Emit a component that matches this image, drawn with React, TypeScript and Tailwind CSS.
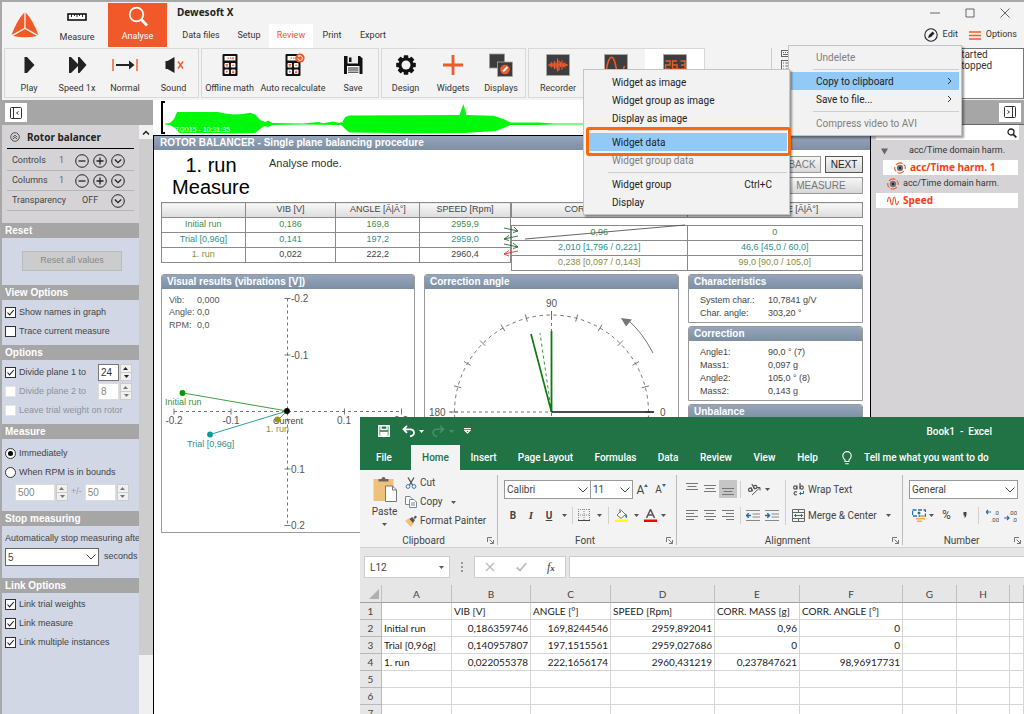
import React from "react";

type Kids = { children?: React.ReactNode };

/* ---------- shared ---------- */

function Caret({ className = "text-[#555]" }: { className?: string }) {
  return (
    <svg viewBox="0 0 5 3" className={"h-[3px] w-[5px] shrink-0 " + className}>
      <path d="M0 0h5L2.5 3z" fill="currentColor" />
    </svg>
  );
}

function SelectBox({ label, value, className, chevron = "#444" }: { label: string; value: string; className: string; chevron?: string }) {
  return (
    <div className={"grid items-center border bg-white " + className}>
      <select aria-label={label} className="col-start-1 row-start-1 h-full w-full appearance-none bg-transparent pl-[2px] outline-none">
        <option>{value}</option>
      </select>
      <svg viewBox="0 0 10 6" className="pointer-events-none col-start-1 row-start-1 mr-[2px] h-[6px] w-[10px] justify-self-end">
        <path d="M0.5 0.5L5 5L9.5 0.5" fill="none" stroke={chevron} strokeWidth="1" />
      </svg>
    </div>
  );
}

/* ---------- title bar ---------- */

const tabs = ["Data files", "Setup", "Review", "Print", "Export"];
const tabWidths = ["w-[56px]", "w-[40px]", "w-[44px]", "w-[38px]", "w-[44px]"];

function TitleBar() {
  return (
    <header className="flex h-[46px] shrink-0 text-[9px] text-[#333]">
      <div className="flex w-[46px] items-center justify-center">
        <svg viewBox="0 0 28 26" className="h-[26px] w-[28px]">
          <path d="M13.3 0.5L13.3 16L0.5 23Q6 8 13.3 0.5z" fill="#f0592a" />
          <path d="M14.6 0.5L14.6 16L27.4 23Q22 8 14.6 0.5z" fill="#f0592a" />
          <path d="M14 17L2 24Q14 26.5 26 24z" fill="#f0592a" />
        </svg>
      </div>
      <button className="flex w-[58px] flex-col items-center pt-[11px]">
        <svg viewBox="0 0 20 8" className="h-[8px] w-[20px]">
          <rect x="1" y="1" width="18" height="6" fill="#fff" stroke="#111" strokeWidth="1.6" />
          <path d="M4.5 1v3M7.5 1v2M10 1v3M12.5 1v2M15.5 1v3" stroke="#111" strokeWidth="0.9" />
        </svg>
        <span className="mt-[10px] leading-[12px]">Measure</span>
      </button>
      <button className="mt-[1px] ml-[2px] flex h-[44px] w-[59px] flex-col items-center bg-[#f1592a] pt-[3px] text-white">
        <svg viewBox="0 0 22 22" className="h-[22px] w-[22px]" fill="none" stroke="#fff">
          <circle cx="9.5" cy="8.5" r="6.8" strokeWidth="1.8" />
          <path d="M14.2 13.4L20 19.5" strokeWidth="2.8" />
        </svg>
        <span className="mt-[2px] leading-[12px]">Analyse</span>
      </button>
      <div className="flex flex-col pl-[6px]">
        <h1 className="pt-[3px] pl-[4px] font-['Noto_Sans',sans-serif] text-[10px] leading-[14px] font-bold text-[#222]">Dewesoft X</h1>
        <nav className="mt-[5px] flex h-[24px]">
          {tabs.map((t, i) => (
            <a key={t} href="#" className={"flex items-center justify-center " + tabWidths[i] + (t === "Review" ? " bg-white text-[#f1592a]" : "")}>
              {t}
            </a>
          ))}
        </nav>
      </div>
      <div className="ml-auto flex flex-col pr-[7px]">
        <div className="flex justify-end gap-[25px] pt-[6px] pr-[7px]">
          {["M0 5h10", "M1 1h8v8h-8z", "M0.5 0.5l9 9M9.5 0.5l-9 9"].map((d, i) => (
            <button key={d} aria-label={["Minimize", "Maximize", "Close"][i]}>
              <svg viewBox="0 0 10 10" className="h-[10px] w-[10px]" fill="none" stroke="#666" strokeWidth="1">
                <path d={d} />
              </svg>
            </button>
          ))}
        </div>
        <div className="flex items-center justify-end gap-[11px] pt-[10px]">
          <button className="flex items-center gap-[5px]">
            <svg viewBox="0 0 14 14" className="h-[14px] w-[14px]">
              <circle cx="7" cy="7" r="6.2" fill="none" stroke="#222" strokeWidth="1.1" />
              <path d="M4 10l1-3 3.6-3.4 1.9 1.9L7 9z" fill="#222" />
            </svg>
            Edit
          </button>
          <button className="flex items-center gap-[5px]">
            <svg viewBox="0 0 12 9" className="h-[9px] w-[12px]" stroke="#f1592a" strokeWidth="1.5">
              <path d="M0 1h12M0 4.5h12M0 8h12" />
            </svg>
            Options
          </button>
        </div>
      </div>
    </header>
  );
}

/* ---------- ribbon ---------- */

function Calc({ badge = false }: { badge?: boolean }) {
  return (
    <svg viewBox="0 0 24 24" className="h-[24px] w-[24px]">
      <rect x="4.5" y="1" width="15" height="22" rx="1" fill="#111" />
      <rect x="6.5" y="3" width="11" height="4.5" fill="#fff" />
      <path d="M9.5 5.2h1.6M12 5.2h1.5M15 4v2.4" stroke="#f1592a" strokeWidth="1.3" />
      <g fill="#fff">
        <rect x="6.5" y="10" width="4.6" height="4.6" rx="1" />
        <rect x="12.9" y="10" width="4.6" height="4.6" rx="1" />
        <rect x="6.5" y="16.5" width="4.6" height="4.6" rx="1" />
        <rect x="12.9" y="16.5" width="4.6" height="4.6" rx="1" />
      </g>
      <path d="M7.700 11.200l2.200 2.200M9.900 11.200l-2.200 2.200M14.100 12.300h2.200M7.800 18.800h2M8.800 17.800v2M14.100 18.200h2.200M14.100 19.600h2.200" stroke="#f1592a" strokeWidth="1.100" />
      {badge && (
        <g>
          <circle cx="19" cy="5" r="4.6" fill="#f1592a" />
          <path d="M16.8 5.3a2.3 2.3 0 1 0 1.2-2.2" fill="none" stroke="#fff" strokeWidth="0.9" />
          <path d="M16.6 2.4l2.2-.2-.9 2z" fill="#fff" />
        </g>
      )}
    </svg>
  );
}

const icon = "h-[24px] w-[24px]";
const PlayIcon = () => (
  <svg viewBox="0 0 24 24" className={icon}><path d="M7.5 4h2.5l7.500 8-7.5 8H7.500z" fill="#222" /></svg>
);
const SpeedIcon = () => (
  <svg viewBox="0 0 24 24" className={icon}><path d="M4 4h2l7 7V4h1.500l7 8-7 8H13v-7l-7 7H4z" fill="#222" /></svg>
);
const NormalIcon = () => (
  <svg viewBox="0 0 26 24" className="h-[24px] w-[26px]">
    <path d="M1 6v12M25 6v12" stroke="#f1592a" strokeWidth="1.4" />
    <path d="M4 11h13V7.500l5.500 4.500-5.500 4.500V13H4z" fill="#222" />
  </svg>
);
const SoundIcon = () => (
  <svg viewBox="0 0 24 24" className={icon}>
    <path d="M3.500 8h2l7-4v16l-7-4h-2z" fill="#222" />
    <path d="M16 8.500l5 7M21 8.500l-5 7" stroke="#f1592a" strokeWidth="1.400" />
  </svg>
);
const SaveIcon = () => (
  <svg viewBox="0 0 24 24" className={icon}>
    <path d="M3 3h16l2.500 2.500V21H3z" fill="#111" />
    <path d="M6.500 3h10.500v7.500H6.500z" fill="#eee" />
    <path d="M8 4.500h2.500v4.500H8z" fill="#111" />
    <path d="M6 13h12.500v8H6z" fill="#fff" />
    <path d="M7 15h10.500M7 17h10.500M7 19.200h10.500" stroke="#222" strokeWidth="1" />
  </svg>
);
const GearIcon = () => (
  <svg viewBox="0 0 24 24" className={icon}>
    {[0, 45, 90, 135].map((a) => (
      <rect key={a} x="9.7" y="2.200" width="4.600" height="19.600" rx="0.800" fill="#111" transform={`rotate(${a} 12 12)`} />
    ))}
    <circle cx="12" cy="12" r="7.600" fill="#111" />
    <circle cx="12" cy="12" r="4.500" fill="#f3f3f3" />
  </svg>
);
const PlusIcon = () => (
  <svg viewBox="0 0 24 24" className={icon}><path d="M12 2v20M2 12h20" stroke="#f1592a" strokeWidth="2.800" /></svg>
);
const DisplaysIcon = () => (
  <svg viewBox="0 0 24 24" className={icon}>
    <rect x="0.500" y="1" width="15" height="14" fill="#3c3c3c" stroke="#999" strokeWidth="0.800" />
    <rect x="8.500" y="9" width="15" height="14.500" fill="#3c3c3c" stroke="#aaa" strokeWidth="0.800" />
    <circle cx="16" cy="16.500" r="4.800" fill="#f1592a" />
    <path d="M14 18.500l4.500-4.500" stroke="#fff" strokeWidth="2" />
  </svg>
);
const RecorderIcon = () => (
  <svg viewBox="0 0 24 24" className={icon}>
    <rect x="0.500" y="1.500" width="23" height="21" fill="#3e3e3e" stroke="#aaa" strokeWidth="0.800" />
    <path d="M2 12h20M4 10.500v3M5.500 9v5.500M7 10v4M8.500 8v8M10 9.500v6M11.500 5.500v13M13 7.500v10M14.500 9v5M16 7.500v9M17.500 10v4M19 9.500v5M20.500 11v2" stroke="#f1592a" strokeWidth="1.200" />
  </svg>
);
const ScopeIcon = () => (
  <svg viewBox="0 0 24 24" className={icon}>
    <rect x="0.500" y="1.500" width="23" height="21" fill="#3e3e3e" stroke="#aaa" strokeWidth="0.800" />
    <path d="M2.500 16C5 1 9.500 1 11.500 12s6 11 9 1" fill="none" stroke="#f1592a" strokeWidth="1.600" />
  </svg>
);
const DigitalIcon = () => (
  <svg viewBox="0 0 24 24" className={icon}>
    <rect x="0.500" y="1.500" width="23" height="21" fill="#3e3e3e" stroke="#aaa" strokeWidth="0.800" />
    <path d="M2.500 8h4.500v4H2.500v4H7M14 8H9.500v8H14v-4H9.500M17.500 8H22v8h-4.500M18 12h4" fill="none" stroke="#f1592a" strokeWidth="1.400" />
    <rect x="15" y="15" width="1.500" height="1.500" fill="#f1592a" />
  </svg>
);

type Tool = { label: string; w: string; el: React.ReactNode };
const groups: { w: string; tools: Tool[] }[] = [
  {
    w: "w-[195px]",
    tools: [
      { label: "Play", w: "w-[48px]", el: <PlayIcon /> },
      { label: "Speed 1x", w: "w-[48px]", el: <SpeedIcon /> },
      { label: "Normal", w: "w-[48px]", el: <NormalIcon /> },
      { label: "Sound", w: "w-[49px]", el: <SoundIcon /> },
    ],
  },
  {
    w: "w-[178px]",
    tools: [
      { label: "Offline math", w: "w-[55px]", el: <Calc /> },
      { label: "Auto recalculate", w: "w-[72px]", el: <Calc badge /> },
      { label: "Save", w: "w-[48px]", el: <SaveIcon /> },
    ],
  },
  {
    w: "w-[145px]",
    tools: [
      { label: "Design", w: "w-[47px]", el: <GearIcon /> },
      { label: "Widgets", w: "w-[48px]", el: <PlusIcon /> },
      { label: "Displays", w: "w-[48px]", el: <DisplaysIcon /> },
    ],
  },
  {
    w: "w-[177px]",
    tools: [
      { label: "Recorder", w: "w-[58px]", el: <RecorderIcon /> },
      { label: "Scope", w: "w-[58px]", el: <ScopeIcon /> },
      { label: "Digital", w: "w-[59px] bg-white", el: <DigitalIcon /> },
    ],
  },
];

function Ribbon() {
  return (
    <div className="flex h-[51px] shrink-0 gap-[2px] pl-[2px] text-[9px] text-[#333]">
      {groups.map((g, i) => (
        <div key={i} className={"flex h-[50px] shrink-0 border border-[#d8d8d8] " + g.w}>
          {g.tools.map((t) => (
            <button key={t.label} className={"flex shrink-0 flex-col items-center pt-[4px] " + t.w}>
              {t.el}
              <span className="mt-[5px] leading-[12px] whitespace-nowrap">{t.label}</span>
            </button>
          ))}
        </div>
      ))}
      <div className="ml-[64px] flex shrink-0 border-l border-[#ccc] pl-[9px]">
        <div className="flex flex-col gap-[3px] pt-[2px]">
          <svg viewBox="0 0 10 7" className="h-[7px] w-[10px]" fill="none" stroke="#555" strokeWidth="0.9">
            <rect x="0.500" y="0.500" width="9" height="6" />
            <path d="M2 2.500h1M4 2.500h1M6 2.500h1M2 4.500h5" />
          </svg>
          <svg viewBox="0 0 10 12" className="h-[12px] w-[10px]" fill="none" stroke="#555" strokeWidth="0.900">
            <rect x="0.500" y="0.500" width="9" height="11" />
            <path d="M2 3h1M4.500 3H8M2 6h1M4.500 6H8M2 9h1M4.500 9H8" />
          </svg>
        </div>
      </div>
      <div className="ml-[10px] flex-1 border border-[#777] bg-white pl-[152px] text-[10px] leading-[11px]">
        <p>started</p>
        <p>stopped</p>
      </div>
    </div>
  );
}

/* ---------- left sidebar ---------- */

function Round({ d, label }: { d: string; label: string }) {
  return (
    <button aria-label={label}>
      <svg viewBox="0 0 14 14" className="h-[14px] w-[14px]" fill="none" stroke="#222">
        <circle cx="7" cy="7" r="6.300" strokeWidth="1" />
        <path d={d} strokeWidth="1.300" />
      </svg>
    </button>
  );
}
const MINUS = "M3.500 7h7";
const PLUS = "M3.500 7h7M7 3.500v7";
const DOWN = "M3.800 5.500L7 8.700l3.200-3.200";

function Section({ title, body, children }: Kids & { title: string; body: string }) {
  return (
    <section>
      <h2 className="h-[15px] bg-[#a6a6a6] pl-[3px] text-[10px] leading-[15px] font-bold text-white">{title}</h2>
      <div className={"flex flex-col pl-[3px] " + body}>{children}</div>
    </section>
  );
}

function Check({ label, checked = false, disabled = false }: { label: string; checked?: boolean; disabled?: boolean }) {
  return (
    <label className={"flex h-[19px] items-center gap-[3px] whitespace-nowrap " + (disabled ? "text-[#8d93a0]" : "")}>
      <span className="grid">
        <input
          type="checkbox"
          defaultChecked={checked}
          disabled={disabled}
          className={"peer col-start-1 row-start-1 h-[11px] w-[11px] appearance-none border bg-white " + (disabled ? "border-[#e4e4e4]" : "border-[#333]")}
        />
        <svg viewBox="0 0 11 11" className="pointer-events-none invisible col-start-1 row-start-1 h-[11px] w-[11px] peer-checked:visible">
          <path d="M2.500 5.500L4.600 7.800L8.800 3" fill="none" stroke="#222" strokeWidth="1.100" />
        </svg>
      </span>
      {label}
    </label>
  );
}

function Radio({ label, checked = false }: { label: string; checked?: boolean }) {
  return (
    <label className="flex h-[19px] items-center gap-[3px] whitespace-nowrap">
      <span className="grid place-items-center">
        <input type="radio" name="measure-start" defaultChecked={checked} className="peer col-start-1 row-start-1 h-[11px] w-[11px] appearance-none rounded-full border border-[#333] bg-white" />
        <span className="pointer-events-none invisible col-start-1 row-start-1 h-[5px] w-[5px] rounded-full bg-black peer-checked:visible" />
      </span>
      {label}
    </label>
  );
}

function Spin({ label, value, w, dim = true }: { label: string; value: string; w: string; dim?: boolean }) {
  return (
    <span className="flex h-[17px] gap-px">
      <input aria-label={label} defaultValue={value} disabled={dim} className={"h-[17px] border bg-white pl-[2px] text-[10px] outline-none " + w + (dim ? " border-[#ddd] text-[#888]" : " border-[#777] text-[#333]")} />
      <span className={"flex w-[12px] flex-col border border-[#ccc] bg-[#f0f0f0] " + (dim ? "text-[#777]" : "text-[#222]")}>
        <button aria-label={label + " up"} className="flex flex-1 rotate-180 items-center justify-center"><Caret className="" /></button>
        <button aria-label={label + " down"} className="flex flex-1 items-center justify-center border-t border-[#ccc]"><Caret className="" /></button>
      </span>
    </span>
  );
}

function PanelButton({ flip = false }: { flip?: boolean }) {
  return (
    <button aria-label="Toggle panel" className="flex h-[19px] w-[22px] items-center justify-center bg-white">
      <svg viewBox="0 0 12 12" className={"h-[12px] w-[12px] " + (flip ? "rotate-180" : "")} fill="none" stroke="#333" strokeWidth="1">
        <rect x="0.500" y="0.500" width="11" height="11" rx="1" />
        <path d="M3.500 0.500v11M8.500 4.500L6.500 6l2 1.500" />
      </svg>
    </button>
  );
}

function Sidebar() {
  return (
    <aside className="flex w-[151px] shrink-0 flex-col">
      <div className="flex h-[25px] shrink-0 items-center bg-[#a6a6a6] pl-[3px]"><PanelButton /></div>
      <div className="flex flex-1">
        <div className="flex w-[137px] flex-col overflow-hidden bg-[#d1d7e4] text-[9px] text-[#444]">
          <div className="bg-[#d6d3d7] px-[5px] pb-[12px]">
            <div className="mb-[2px] flex h-[24px] items-center gap-[7px] border-b border-black pt-px pl-[3px]">
              <svg viewBox="0 0 10 10" className="h-[10px] w-[10px]" fill="none" stroke="#444" strokeWidth="0.900">
                <circle cx="5" cy="5" r="4.300" />
                <path d="M2.800 5.200L5 3.200l2.200 2M2.800 7.200L5 5.200l2.200 2" />
              </svg>
              <h2 className="font-['Noto_Sans',sans-serif] text-[10px] leading-[12px] font-bold text-[#222]">Rotor balancer</h2>
            </div>
            {["Controls", "Columns"].map((n) => (
              <div key={n} className="flex h-[20px] items-center border-b border-[#b5b5b5] pr-[9px] pl-[5px] font-['Roboto',sans-serif]">
                <span className="w-[47px]">{n}</span>
                <span className="text-[#666]">1</span>
                <span className="ml-auto flex gap-[4px]">
                  <Round d={MINUS} label={n + " minus"} />
                  <Round d={PLUS} label={n + " plus"} />
                  <Round d={DOWN} label={n + " more"} />
                </span>
              </div>
            ))}
            <div className="flex h-[20px] items-center border-b border-[#b5b5b5] pr-[9px] pl-[5px] font-['Roboto',sans-serif]">
              <span className="w-[70px]">Transparency</span>
              <span>OFF</span>
              <span className="ml-auto flex"><Round d={DOWN} label="Transparency more" /></span>
            </div>
          </div>
          <Section title="Reset" body="items-center pt-[13px] pb-[14px]">
            <button disabled className="h-[20px] w-[100px] border border-[#bbb] bg-[#ccc] text-[#888]">Reset all values</button>
          </Section>
          <Section title="View Options" body="pt-[3px] pb-[4px]">
            <Check label="Show names in graph" checked />
            <Check label="Trace current measure" />
          </Section>
          <Section title="Options" body="pt-[3px] pb-[4px]">
            <div className="flex items-center justify-between pr-[7px]"><Check label="Divide plane 1 to" checked /><Spin label="Plane 1 divisions" value="24" w="w-[21px]" dim={false} /></div>
            <div className="flex items-center justify-between pr-[7px]"><Check label="Divide plane 2 to" disabled /><Spin label="Plane 2 divisions" value="8" w="w-[21px]" /></div>
            <Check label="Leave trial weight on rotor" disabled />
          </Section>
          <Section title="Measure" body="pt-[5px] pb-[9px]">
            <Radio label="Immediately" checked />
            <Radio label="When RPM is in bounds" />
            <div className="flex h-[20px] items-center gap-[3px] pl-[10px] text-[#999]">
              <Spin label="RPM" value="500" w="w-[40px]" />+/-<Spin label="RPM tolerance" value="50" w="w-[31px]" />
            </div>
          </Section>
          <Section title="Stop measuring" body="pt-[6px] pb-[12px]">
            <p className="leading-[12px] whitespace-nowrap">Automatically stop measuring after</p>
            <div className="mt-[4px] flex items-center gap-[5px]">
              <SelectBox label="Seconds" value="5" className="h-[18px] w-[94px] border-[#666] text-[10px]" />
              seconds
            </div>
          </Section>
          <Section title="Link Options" body="pt-[2px]">
            <Check label="Link trial weights" checked />
            <Check label="Link measure" checked />
            <Check label="Link multiple instances" checked />
          </Section>
        </div>
        <div className="flex w-[14px] flex-col bg-[#f0f0f0]">
          <button aria-label="Scroll up" className="flex h-[14px] items-center justify-center">
            <svg viewBox="0 0 8 5" className="h-[5px] w-[8px]"><path d="M1 4.500L4 1.500l3 3" fill="none" stroke="#222" strokeWidth="1.500" /></svg>
          </button>
          <div className="h-[516px] bg-[#cdcdcd]" />
        </div>
      </div>
    </aside>
  );
}

/* ---------- centre ---------- */

function Wave() {
  return (
    <svg viewBox="0 0 717 35" preserveAspectRatio="none" className="h-[35px] w-full bg-white">
      <path
        d="M12 23.500L17 23 21 19 24 12 65 12 72 13.500 80 14.500 90 14 97 12.800 102 14.500 107 20 112 22 115 20.500 119 23 150 23.500 165 22 170 23.200 180 21.500 186 23 188 22 190 23.300 189 22 192 17 196 15.500 306 15 310 4 313 15 340 15.800 350 19 357 22.500 385 22.500 400 23.600 717 23.600V24.400H400L385 25H357L350 28 342 31 310 33 250 33.500 240 33 196 32.500 192 29 188 25 150 24.400 119 25 115 27 111 26 107 29 102 33 80 33.500 60 33 26 33 22 28 17 25 12 24.500z"
        fill="#00f90a"
      />
      <path d="M12 2H9v31h3" fill="none" stroke="#000" strokeWidth="2" />
      <text x="22" y="32" fill="#fff" fontSize="7" fontFamily="Liberation Sans, sans-serif">7/2015 - 10:31:35</text>
    </svg>
  );
}

const th = "h-[15px] border border-[#8a8a8a] bg-linear-to-b from-[#f8f8f8] to-[#dcdcdc] p-0 text-center font-normal";
const td = "h-[15px] border border-[#8a8a8a] p-0 text-center";

function LeftTable() {
  const rows = [
    ["text-[#3f8f3f]", "text-[#3f8f3f]", "Initial run", "0,186", "169,8", "2959,9"],
    ["text-[#2f8f8f]", "text-[#2f8f8f]", "Trial [0,96g]", "0,141", "197,2", "2959,0"],
    ["text-[#8c8c3a]", "text-[#444]", "1. run", "0,022", "222,2", "2960,4"],
  ];
  return (
    <table className="w-full table-fixed border-collapse">
      <thead>
        <tr>
          <th className={th + " w-[24%]"} />
          <th className={th + " w-[26%]"}>VIB [V]</th>
          <th className={th + " w-[24%]"}>ANGLE [Ã|Â°]</th>
          <th className={th + " w-[26%]"}>SPEED [Rpm]</th>
        </tr>
      </thead>
      <tbody>
        {rows.map((r) => (
          <tr key={r[2]} className={r[1]}>
            <td className={td + " " + r[0]}>{r[2]}</td>
            <td className={td}>{r[3]}</td>
            <td className={td}>{r[4]}</td>
            <td className={td}>{r[5]}</td>
          </tr>
        ))}
      </tbody>
    </table>
  );
}

function RightTables() {
  return (
    <div className="relative flex flex-1 flex-col gap-[7px]">
      <table className="w-full table-fixed border-collapse">
        <thead>
          <tr><th className={th}>CORR. MASS [g]</th><th className={th}>CORR. ANGLE [Ã|Â°]</th></tr>
        </thead>
      </table>
      <table className="w-full table-fixed border-collapse">
        <tbody>
          <tr className="text-[#3f8f3f]"><td className={td}>0,96</td><td className={td}>0</td></tr>
          <tr className="text-[#2f8f8f]"><td className={td}>2,010 [1,796 / 0,221]</td><td className={td}>46,6 [45,0 / 60,0]</td></tr>
          <tr className="text-[#8c8c3a]"><td className={td}>0,238 [0,097 / 0,143]</td><td className={td}>99,0 [90,0 / 105,0]</td></tr>
        </tbody>
      </table>
      <svg viewBox="0 0 190 40" className="pointer-events-none absolute top-[20px] -left-[10px] h-[40px] w-[190px]" fill="none">
        <path d="M24 17L184 3" stroke="#555" strokeWidth="0.900" />
        <path d="M3 6l14 3M13 5l4 4-5 1.500M17 14L3 17M8 13.500L3 17l5 1.500M3 22l14 3M12 21l5 4-5 1.500" stroke="#1f6f2f" strokeWidth="0.900" />
        <path d="M17 29L3 32M8 28.500L3 32l5 2" stroke="#f03030" strokeWidth="0.900" />
      </svg>
    </div>
  );
}

function Box({ title, className = "", children }: Kids & { title: string; className?: string }) {
  return (
    <section className={"overflow-hidden rounded-t-[3px] border border-[#999] bg-white " + className}>
      <h3 className="h-[14px] bg-linear-to-b from-[#94a5bd] to-[#7d8fa2] pl-[5px] text-[10px] leading-[14px] font-bold text-white">{title}</h3>
      {children}
    </section>
  );
}

function VibChart() {
  return (
    <svg viewBox="0 0 252 243" className="h-[243px] w-[252px]" fontFamily="Liberation Sans, sans-serif" fontSize="10" fill="#555">
      <g stroke="#666" strokeWidth="0.900" fill="none">
        <path d="M125.500 9.500v227M12 122.500h228" strokeDasharray="3 3" />
        <path d="M122.500 9.500h6M122.500 66h6M122.500 180h6M122.500 236.500h6M12 119.500v6M69 119.500v6M182.500 119.500v6M239.500 119.500v6" />
      </g>
      <g fontSize="9">
        <text x="7" y="14">Vib:</text><text x="35" y="14">0,000</text>
        <text x="7" y="26">Angle:</text><text x="35" y="26">0,0</text>
        <text x="7" y="39">RPM:</text><text x="35" y="39">0,0</text>
      </g>
      <text x="129" y="13">-0.2</text>
      <text x="129" y="70">-0.1</text>
      <text x="129" y="184">0.1</text>
      <text x="129" y="240">0.2</text>
      <g textAnchor="middle">
        <text x="12" y="135">-0.2</text>
        <text x="69" y="135">-0.1</text>
        <text x="182" y="135">0.1</text>
        <text x="239" y="135">0.2</text>
      </g>
      <path d="M125 122L21 104" stroke="#3f9f3f" />
      <path d="M125 122L48 145.500" stroke="#2f9f9f" />
      <path d="M125 122L116 131" stroke="#999900" />
      <text x="111" y="135" fontSize="9" fill="#444">Current</text>
      <circle cx="125" cy="122" r="2.900" fill="#000" />
      <circle cx="20.500" cy="104" r="2.900" fill="#090" />
      <circle cx="48" cy="145.500" r="2.900" fill="#0a9a9a" />
      <circle cx="115.500" cy="130.500" r="2.900" fill="#990" />
      <text x="3" y="116" fontSize="9" fill="#3f8f3f">Initial run</text>
      <text x="25" y="158" fontSize="9" fill="#2f8f8f">Trial [0,96g]</text>
      <text x="104" y="143" fontSize="9" fill="#8c8c3a">1. run</text>
    </svg>
  );
}

function Gauge() {
  const cx = 126.500, cy = 123, r = 97;
  const ticks = Array.from({ length: 13 }, (_, i) => (i * Math.PI) / 12);
  return (
    <svg viewBox="0 0 253 243" className="h-[243px] w-[253px]" fontFamily="Liberation Sans, sans-serif" fontSize="10" fill="#555">
      <g stroke="#666" strokeWidth="0.900" fill="none">
        <path d={`M${cx - r} ${cy}A${r} ${r} 0 0 1 ${cx + r} ${cy}A${r} ${r} 0 0 1 ${cx - r} ${cy}`} strokeDasharray="3.500 3.500" />
        <path d={`M${cx} 22V240M24 ${cy}H${cx}`} strokeDasharray="3 3" />
        {ticks.map((a) => (
          <path key={a} d={`M${cx + (r - 3.5) * Math.cos(a)} ${cy - (r - 3.5) * Math.sin(a)}L${cx + (r + 4) * Math.cos(a)} ${cy - (r + 4) * Math.sin(a)}`} />
        ))}
        <path d="M228 64Q217 43 203 31" />
      </g>
      <path d="M196 29l11 1.500-6 7z" fill="#777" />
      <path d={`M${cx} ${cy}L115 44`} stroke="#3f8f3f" strokeDasharray="3 3" />
      <path d={`M${cx} ${cy}L106 45`} stroke="#107a10" strokeWidth="1.700" />
      <path d={`M${cx} ${cy}V42`} stroke="#107a10" strokeWidth="1.800" />
      <path d={`M${cx} ${cy}H229`} stroke="#111" strokeWidth="1.700" />
      <text x={cx} y="18" textAnchor="middle">90</text>
      <text x="235" y="127">0</text>
      <text x="4" y="127">180</text>
    </svg>
  );
}

function Facts({ rows }: { rows: string[][] }) {
  return (
    <dl className="grid grid-cols-[68px_1fr] pt-[5px] pl-[11px] text-[9px] leading-[13px] text-[#444]">
      {rows.map(([k, v]) => (
        <React.Fragment key={k}><dt>{k}</dt><dd>{v}</dd></React.Fragment>
      ))}
    </dl>
  );
}

function PushButton({ className, children }: Kids & { className: string }) {
  return <button className={"h-[17px] border bg-linear-to-b from-[#f6f6f6] to-[#d8d8d8] text-[10px] leading-[15px] " + className}>{children}</button>;
}

function Balancer() {
  return (
    <main className="flex flex-1 flex-col overflow-hidden border-x border-t border-black bg-white">
      <h2 className="h-[14px] shrink-0 bg-linear-to-b from-[#94a5bd] to-[#7d8fa2] pl-[6px] text-[10px] leading-[13px] font-bold text-white">
        ROTOR BALANCER - Single plane balancing procedure
      </h2>
      <div className="flex h-[52px] shrink-0 px-[7px]">
        <p className="w-[100px] pt-[4px] text-center text-[20px] leading-[22px] text-black">1. run<br />Measure</p>
        <p className="pt-[6px] pl-[8px] text-[11px] leading-[14px] text-[#333]">Analyse mode.</p>
        <div className="ml-auto flex flex-col gap-[4px] pt-[6px]">
          <div className="flex justify-end gap-[4px]">
            <PushButton className="w-[38px] border-[#999] text-[#777]">BACK</PushButton>
            <PushButton className="w-[38px] border-[#555] text-[#222]">NEXT</PushButton>
          </div>
          <PushButton className="w-[84px] border-[#999] text-[#777]">MEASURE</PushButton>
        </div>
      </div>
      <div className="flex h-[72px] shrink-0 px-[7px] text-[9px] text-[#444]">
        <div className="w-[350px]"><LeftTable /></div>
        <RightTables />
      </div>
      <div className="flex items-start gap-[9px] px-[7px]">
        <Box title="Visual results (vibrations [V])" className="w-[254px] shrink-0"><VibChart /></Box>
        <Box title="Correction angle" className="w-[255px] shrink-0"><Gauge /></Box>
        <div className="flex flex-1 flex-col gap-[3px]">
          <Box title="Characteristics" className="h-[49px]">
            <Facts rows={[["System char.:", "10,7841 g/V"], ["Char. angle:", "303,20 °"]]} />
          </Box>
          <Box title="Correction" className="h-[75px]">
            <Facts rows={[["Angle1:", "90,0 ° (7)"], ["Mass1:", "0,097 g"], ["Angle2:", "105,0 ° (8)"], ["Mass2:", "0,143 g"]]} />
          </Box>
          <Box title="Unbalance" className="h-[49px]" />
        </div>
      </div>
    </main>
  );
}

/* ---------- channel list ---------- */

function ChannelIcon() {
  return (
    <svg viewBox="0 0 12 12" className="h-[12px] w-[12px] shrink-0" fill="none">
      <circle cx="6" cy="6" r="3.200" fill="#777" />
      <circle cx="6" cy="6" r="1.200" fill="#222" />
      <path d="M2 2.800Q5 -0.200 8.500 1.500M10 9.200Q7 12.200 3.500 10.500M0.800 5v2.500l1.500 2M11.200 7V4.500l-1.500-2" stroke="#f1592a" strokeWidth="1.100" />
    </svg>
  );
}

function Channels() {
  return (
    <aside className="flex w-[153px] shrink-0 flex-col bg-[#d6d3d7] text-[9px] text-[#333]">
      <div className="flex h-[25px] items-center justify-end border-b border-[#666] bg-[#a6a6a6] pr-[3px]"><PanelButton flip /></div>
      <div className="mx-[5px] flex h-[15px] items-center bg-white pr-[2px]">
        <input aria-label="Search" placeholder="Search" className="w-full bg-transparent pl-[2px] text-[9px] outline-none" />
        <svg viewBox="0 0 10 10" className="h-[10px] w-[10px] shrink-0" fill="none" stroke="#222">
          <circle cx="4" cy="4" r="3" strokeWidth="1.300" /><path d="M6.300 6.300L9.300 9.300" strokeWidth="1.700" />
        </svg>
      </div>
      <ul className="mt-[3px] flex flex-col gap-[1px] pr-[6px] pl-[5px]">
        <li className="flex h-[16px] items-center pl-[5px]">
          <svg viewBox="0 0 7 7" className="h-[7px] w-[7px]"><path d="M0 0.500h7L3.500 6.500z" fill="#666" /></svg>
          <span className="pl-[21px]">acc/Time domain harm.</span>
        </li>
        <li className="ml-[7px] flex h-[15px] items-center gap-[4px] bg-white pl-[11px] font-['Noto_Sans',sans-serif] text-[10px] font-bold text-[#ff3b14]">
          <ChannelIcon />acc/Time harm. 1
        </li>
        <li className="flex h-[16px] items-center gap-[4px] pl-[11px]"><ChannelIcon />acc/Time domain harm.</li>
        <li className="flex h-[15px] items-center gap-[4px] bg-white pl-[11px] font-['Noto_Sans',sans-serif] text-[10px] font-bold text-[#ff3b14]">
          <svg viewBox="0 0 12 10" className="h-[10px] w-[12px]" fill="none" stroke="#f1592a" strokeWidth="1.100">
            <path d="M0.500 6C1 0 3 0 3.500 5s2 5 2.500 0 2-5 2.500 0 2 5 3 0" />
          </svg>
          Speed
        </li>
      </ul>
    </aside>
  );
}

/* ---------- context menus ---------- */

function Item({ label, right, disabled = false, active = false, pad }: { label: string; right?: React.ReactNode; disabled?: boolean; active?: boolean; pad: string }) {
  return (
    <button role="menuitem" disabled={disabled} className={"flex h-[18px] w-full items-center justify-between text-left " + pad + (active ? " bg-[#91c9f7]" : "") + (disabled ? " text-[#808080]" : "")}>
      <span>{label}</span>
      {right}
    </button>
  );
}
const Sep = () => <div role="separator" className="ml-[22px] flex h-[6px] items-center"><div className="h-px flex-1 bg-[#cfcfcf]" /></div>;
const Chev = () => (
  <svg viewBox="0 0 5 8" className="h-[8px] w-[5px]"><path d="M1 1l3 3-3 3" fill="none" stroke="#333" strokeWidth="1" /></svg>
);

function Menus() {
  const l = "pl-[26px] pr-[15px]";
  const r = "pl-[25px] pr-[7px]";
  return (
    <>
      <div role="menu" className="absolute top-[45px] left-[788px] w-[174px] border border-[#c4c4c4] bg-[#f2f2f2] px-[2px] pt-[2px] pb-[3px] text-[10px] text-[#222] shadow-[2px_2px_2px_#0006]">
        <Item label="Undelete" disabled pad={r} />
        <Sep />
        <Item label="Copy to clipboard" active pad={r} right={<Chev />} />
        <Item label="Save to file..." pad={r} right={<Chev />} />
        <Sep />
        <Item label="Compress video to AVI" disabled pad={r} />
      </div>
      <div role="menu" className="absolute top-[69px] left-[583px] w-[207px] border border-[#c4c4c4] bg-[#f2f2f2] px-[2px] py-[3px] text-[10px] text-[#222] shadow-[2px_2px_2px_#0006]">
        <Item label="Widget as image" pad={l} />
        <Item label="Widget group as image" pad={l} />
        <Item label="Display as image" pad={l} />
        <Sep />
        <Item label="Widget data" active pad={l} />
        <Item label="Widget group data" disabled pad={l} />
        <Sep />
        <Item label="Widget group" pad={l} right={<span>Ctrl+C</span>} />
        <Item label="Display" pad={l} />
      </div>
      <div className="pointer-events-none absolute top-[127px] left-[586px] h-[29px] w-[205px] rounded-[3px] border-[3px] border-[#fb6a0a]" />
    </>
  );
}

/* ---------- spreadsheet window ---------- */

const Lines = ({ d }: { d: string }) => (
  <svg viewBox="0 0 12 12" className="h-[12px] w-[12px]" fill="none" stroke="#777" strokeWidth="1"><path d={d} /></svg>
);
const VSep = () => <div className="h-[17px] w-px bg-[#d0d0d0]" />;

function ExGroup({ label, className, children }: Kids & { label: string; className: string }) {
  return (
    <div className={"flex shrink-0 flex-col pt-[10px] " + className}>
      <div className="flex-1">{children}</div>
      <div className="flex h-[14px] items-center pr-[3px]">
        <span className="flex-1 text-center">{label}</span>
        <button aria-label={label + " settings"}>
          <svg viewBox="0 0 7 7" className="h-[7px] w-[7px]" fill="none" stroke="#666" strokeWidth="0.900">
            <path d="M0.500 5V0.500H5M2.500 2.500L6 6M6.500 3v3.500H3" />
          </svg>
        </button>
      </div>
    </div>
  );
}

const ib = "flex h-[18px] w-[18px] items-center justify-center";

function ExcelRibbon() {
  return (
    <div className="flex h-[78px] shrink-0 overflow-hidden border-b border-[#d2d2d2] bg-[#f3f3f3] text-[10px] text-[#444]">
      <ExGroup label="Clipboard" className="w-[137px]">
        <div className="-mt-[4px] flex">
          <button className="flex w-[44px] flex-col items-center pl-[5px]">
            <svg viewBox="0 0 24 26" className="h-[26px] w-[24px]">
              <rect x="0.500" y="3" width="20" height="22" fill="#eec27a" />
              <path d="M5.500 5.500V3h3a2 2 0 0 1 4 0h3v2.500z" fill="#666" />
              <path d="M12.500 10h7l4 4v11.500h-11z" fill="#fff" stroke="#777" />
              <path d="M19.500 10v4h4" fill="none" stroke="#777" />
            </svg>
            <span className="mt-[4px] leading-[12px]">Paste</span>
            <span className="mt-[5px]"><Caret /></span>
          </button>
          <div className="flex flex-col gap-[7px] pt-px pl-[1px] leading-[12px]">
            <button className="flex items-center gap-[3px]">
              <svg viewBox="0 0 12 12" className="h-[12px] w-[12px]" fill="none"><path d="M3 0.500L7.500 8M9 0.500L4.500 8" stroke="#555" strokeWidth="1.300" /><circle cx="3" cy="9.500" r="1.900" stroke="#3a78c0" /><circle cx="9" cy="9.500" r="1.900" stroke="#3a78c0" /></svg>
              Cut
            </button>
            <button className="flex items-center gap-[3px]">
              <svg viewBox="0 0 12 12" className="h-[12px] w-[12px]" fill="#fff" stroke="#6a7b8f" strokeWidth="0.900"><path d="M0.500 0.500h4.500l2 2v6h-6.500z" /><path d="M4.500 3.500h4.500l2.500 2.500v5.500h-7zM6 7h4M6 9h4" /></svg>
              Copy<span className="pl-[5px]"><Caret /></span>
            </button>
            <button className="flex items-center gap-[3px]">
              <svg viewBox="0 0 12 12" className="h-[12px] w-[12px]"><path d="M0 6l4-3 5 5-3 4z" fill="#eec27a" /><path d="M4.500 4L7 2l3 3-2 3zM8.500 2.500L10.500 0.500l1.500 1.500-2 2z" fill="#555" /></svg>
              Format Painter
            </button>
          </div>
        </div>
      </ExGroup>
      <div className="mt-[5px] h-[70px] w-px shrink-0 bg-[#bbb]" />
      <ExGroup label="Font" className="w-[178px] pl-[6px]">
        <div className="flex">
          <SelectBox label="Font name" value="Calibri" className="h-[19px] w-[87px] border-[#999]" />
          <SelectBox label="Font size" value="11" className="-ml-px h-[19px] w-[43px] border-[#999]" />
          <button className="flex w-[19px] items-center justify-center text-[12px]">A<svg viewBox="0 0 4 3" className="mb-[9px] h-[3px] w-[4px]"><path d="M0 3L2 0l2 3z" fill="#2a6ab0" /></svg></button>
          <button className="flex w-[17px] items-center justify-center">A<svg viewBox="0 0 4 3" className="mb-[9px] h-[3px] w-[4px]"><path d="M0 0l2 3 2-3z" fill="#2a6ab0" /></svg></button>
        </div>
        <div className="mt-[7px] flex h-[18px] items-center">
          <button className={ib + " font-bold"}>B</button>
          <button className={ib + " font-['Liberation_Serif',serif] text-[11px] font-bold italic"}>I</button>
          <button className={ib + " font-bold underline"}>U</button>
          <span className="w-[14px] pl-[4px]"><Caret /></span>
          <VSep />
          <button className="flex w-[22px] justify-center">
            <svg viewBox="0 0 12 12" className="h-[12px] w-[12px]" fill="none" stroke="#888" strokeDasharray="1 1"><path d="M0.500 0v11M6 0v11M11.500 0v11M0 0.500h12M0 6h12" /><path d="M0 11.500h12" stroke="#444" strokeDasharray="none" /></svg>
          </button>
          <span className="w-[13px] pl-[2px]"><Caret /></span>
          <VSep />
          <button className="flex w-[25px] justify-center">
            <svg viewBox="0 0 13 13" className="h-[13px] w-[13px]"><path d="M2 6L6.500 1.500l4 4L6 9.500z" fill="#fff" stroke="#666" strokeWidth="0.900" /><path d="M5 0v4" stroke="#666" /><path d="M10.500 4.500q2.500 2 1.200 4.500-2 0-1.200-4.500z" fill="#2a6ab0" /><path d="M0 10.500h13v2.500H0z" fill="#ff0" /></svg>
          </button>
          <Caret />
          <button className="flex w-[22px] justify-center">
            <svg viewBox="0 0 13 13" className="h-[13px] w-[13px]"><path d="M2.500 9L6.500 0.500l4 8.500M4 6h5" fill="none" stroke="#555" strokeWidth="1.500" /><path d="M0 10.500h13v2.500H0z" fill="#f00" /></svg>
          </button>
          <Caret />
        </div>
      </ExGroup>
      <div className="mt-[5px] h-[70px] w-px shrink-0 bg-[#bbb]" />
      <ExGroup label="Alignment" className="w-[225px] pl-[6px]">
        <div className="flex">
          <div className="flex w-[102px] flex-col gap-[8px]">
            <div className="flex items-center">
              <button className={ib}><Lines d="M0 0.500h12M1.500 3.500h9M0 6.500h12" /></button>
              <button className={ib}><Lines d="M0 2.500h12M1.500 5.500h9M0 8.500h12" /></button>
              <button className={ib + " bg-[#c6c6c6]"}><Lines d="M0 5.500h12M1.500 8.500h9M0 11.500h12" /></button>
              <span className="w-[6px] pl-[3px]"><VSep /></span>
              <button className="flex w-[22px] justify-center">
                <svg viewBox="0 0 14 13" className="h-[13px] w-[14px]" fill="none" stroke="#555" strokeWidth="1.200">
                  <circle cx="3.200" cy="6.800" r="1.700" /><path d="M3.700 4.300L5.700 8.200M4.800 1L8 6.200" /><circle cx="8.200" cy="4" r="1.700" /><path d="M5 12L13 4.500M13 7.500v-3h-3" strokeWidth="1" />
                </svg>
              </button>
              <Caret />
            </div>
            <div className="flex items-center">
              <button className={ib}><Lines d="M0 1.500h12M0 4.500h8M0 7.500h12M0 10.500h8" /></button>
              <button className={ib}><Lines d="M0 1.500h12M2 4.500h8M0 7.500h12M2 10.500h8" /></button>
              <button className={ib}><Lines d="M0 1.500h12M4 4.500h8M0 7.500h12M4 10.500h8" /></button>
              <span className="w-[6px] pl-[3px]"><VSep /></span>
              {["M0.500 5.500h4.500M2.700 3.200L0.500 5.500l2.200 2.300", "M0 5.500h4.500M2.300 3.200l2.200 2.300-2.200 2.300"].map((d) => (
                <button key={d} className="flex w-[19px] justify-center">
                  <svg viewBox="0 0 14 11" className="h-[11px] w-[14px]" fill="none"><path d="M0 0.500h14M6.500 4h7.500M6.500 7h7.500M0 10.500h14" stroke="#888" /><path d={d} stroke="#2a6ab0" strokeWidth="1.500" /></svg>
                </button>
              ))}
            </div>
          </div>
          <div className="h-[45px] w-px bg-[#d0d0d0]" />
          <div className="flex flex-col gap-[8px] pl-[6px]">
            <button className="flex h-[18px] items-center gap-[3px]">
              <svg viewBox="0 0 13 13" className="h-[13px] w-[13px]" fill="none" stroke="#555" strokeWidth="1.200">
                <circle cx="3.200" cy="4.500" r="1.600" /><path d="M5 2.500v4M8 0v6.200" /><circle cx="9.700" cy="4.500" r="1.600" /><path d="M5 9.200Q2.200 7.800 2.200 10.200T5 11.500" />
                <path d="M11.500 8v2.500H7.500M9 9L7.500 10.500 9 12" stroke="#2a6ab0" strokeWidth="1" />
              </svg>
              Wrap Text
            </button>
            <button className="flex h-[18px] items-center gap-[3px]">
              <svg viewBox="0 0 13 13" className="h-[13px] w-[13px]" fill="none" stroke="#666"><path d="M0.500 0.500h12v12h-12zM0.500 3.500h12M0.500 9.500h12M6.500 0.500v3M6.500 9.500v3" /><path d="M2.500 6.500h8M4 5L2.500 6.500 4 8M9 5l1.500 1.500L9 8" stroke="#2a6ab0" /></svg>
              Merge &amp; Center<span className="pl-[6px]"><Caret /></span>
            </button>
          </div>
        </div>
      </ExGroup>
      <div className="mt-[5px] h-[70px] w-px shrink-0 bg-[#bbb]" />
      <ExGroup label="Number" className="flex-1 pl-[6px]">
        <SelectBox label="Number format" value="General" className="h-[19px] w-[109px] border-[#999]" />
        <div className="mt-[7px] flex h-[18px] items-center">
          <button className="flex w-[20px] justify-center">
            <svg viewBox="0 0 14 13" className="h-[13px] w-[14px]"><path d="M0.500 1h13v6h-13z" fill="#fff" stroke="#2a6ab0" strokeWidth="1.500" strokeDasharray="4 1.500" /><circle cx="7" cy="4" r="1.500" fill="#2a6ab0" /><path d="M8 6h5v2H8zM8 9h5v1.500H8zM4 9h5v1.500H4zM5 11.500h5V13H5z" fill="#e9b05c" /></svg>
          </button>
          <Caret />
          <button className="w-[25px] text-center text-[12px]">%</button>
          <button aria-label="Comma style" className="flex w-[11px] justify-center">
            <svg viewBox="0 0 4 6" className="h-[6px] w-[4px]"><path d="M0.500 0h3v2.500Q3.500 5 1 6q1-1.500 0.500-2.500h-1z" fill="#444" /></svg>
          </button>
          <span className="w-[13px] pl-[8px]"><VSep /></span>
          {["M0 3h5M2 1L0.200 3 2 5", "M0 9h5M3 7l2 2-2 2"].map((d, i) => (
            <button key={d} aria-label={i ? "Decrease decimal" : "Increase decimal"} className="flex w-[18px] justify-center">
              <svg viewBox="0 0 13 13" className="h-[13px] w-[13px]"><path d={d} fill="none" stroke="#2a6ab0" strokeWidth="1.200" /><text x="13" y="6" fontSize="6" textAnchor="end" fill="#444">{i ? ".00" : ".0"}</text><text x="13" y="12.500" fontSize="6" textAnchor="end" fill="#444">{i ? ".0" : ".00"}</text></svg>
            </button>
          ))}
        </div>
      </ExGroup>
    </div>
  );
}

const sheet = [
  ["", "VIB [V]", "ANGLE [°]", "SPEED [Rpm]", "CORR. MASS [g]", "CORR. ANGLE [°]", "", "", ""],
  ["Initial run", "0,186359746", "169,8244546", "2959,892041", "0,96", "0", "", "", ""],
  ["Trial [0,96g]", "0,140957807", "197,1515561", "2959,027686", "0", "0", "", "", ""],
  ["1. run", "0,022055378", "222,1656174", "2960,431219", "0,237847621", "98,96917731", "", "", ""],
  ["", "", "", "", "", "", "", "", ""],
  ["", "", "", "", "", "", "", "", ""],
  ["", "", "", "", "", "", "", "", ""],
];
const colWidths = ["w-[22px]", "w-[70px]", "w-[79px]", "w-[80px]", "w-[104px]", "w-[85px]", "w-[103px]", "w-[54px]", "w-[53px]", ""];

function Sheet() {
  return (
    <table className="w-full table-fixed border-separate border-spacing-0 bg-white font-['Lato',sans-serif] text-[10px] leading-[16px] text-[#222]">
      <thead>
        <tr className="bg-[#e6e6e6]">
          {["", "A", "B", "C", "D", "E", "F", "G", "H", ""].map((c, i) => (
            <th key={i} className={"h-[18px] border-r border-b border-r-[#c0c0c0] border-b-[#a0a0a0] p-0 text-center font-normal text-[#444] " + colWidths[i]}>
              {i === 0 ? <svg viewBox="0 0 10 10" className="ml-auto h-[10px] w-[12px] pr-[2px]"><path d="M10 0v10H0z" fill="#b0b0b0" /></svg> : c}
            </th>
          ))}
        </tr>
      </thead>
      <tbody>
        {sheet.map((row, r) => (
          <tr key={r}>
            <th className="h-[17px] border-r border-b border-[#b8b8b8] bg-[#e6e6e6] p-0 text-center font-normal text-[#444]">{r + 1}</th>
            {row.map((c, i) => (
              <td key={i} className={"h-[17px] border-r border-b border-[#d6d6d6] px-[2px] py-0 whitespace-nowrap " + (r > 0 && i > 0 ? "text-right" : "text-left")}>{c}</td>
            ))}
          </tr>
        ))}
      </tbody>
    </table>
  );
}

const exTabs = [
  ["Insert", "w-[47px]"], ["Page Layout", "w-[77px]"], ["Formulas", "w-[63px]"], ["Data", "w-[42px]"],
  ["Review", "w-[54px]"], ["View", "w-[43px]"], ["Help", "w-[43px]"],
];

function Excel() {
  return (
    <section className="absolute top-[417px] right-0 bottom-0 left-[360px] flex flex-col overflow-hidden bg-white font-['Roboto',sans-serif] text-[10px]">
      <div className="flex h-[28px] shrink-0 items-center bg-[#217346] pl-[18px] text-white">
        <button aria-label="Save">
          <svg viewBox="0 0 12 12" className="h-[12px] w-[12px]" fill="none" stroke="#fff" strokeWidth="1.500"><path d="M0.800 0.800h10.400v10.400H0.800z" /><path d="M3 1v3.500h6V1" /><path d="M3 11V7.500h6V11" fill="#fff" /></svg>
        </button>
        <button aria-label="Undo" className="ml-[12px] flex items-center gap-[4px]">
          <svg viewBox="0 0 13 12" className="h-[12px] w-[13px]" fill="none" stroke="#fff" strokeWidth="1.800"><path d="M5 0.800L1.500 4.300 5 7.800M1.500 4.300h6.500q4 0.200 4 3.500 0 3-4 3.500" /></svg>
          <Caret className="text-white" />
        </button>
        <button aria-label="Redo" className="ml-[8px] flex items-center gap-[4px] text-[#4a8f6a]">
          <svg viewBox="0 0 13 12" className="h-[12px] w-[13px]" fill="none" stroke="currentColor" strokeWidth="1.500"><path d="M8 0.800l3.500 3.500L8 7.800M11.500 4.300H5Q1 4.500 1 7.800q0 3 4 3.500" /></svg>
          <Caret className="" />
        </button>
        <button aria-label="Customize toolbar" className="ml-[10px]">
          <svg viewBox="0 0 7 6" className="h-[6px] w-[7px]" fill="none" stroke="#fff" strokeWidth="1.100"><path d="M0 0.600h7M1 2.500L3.500 5 6 2.500z" /></svg>
        </button>
        <span className="mr-[32px] ml-auto font-medium">Book1&nbsp; -&nbsp; Excel</span>
      </div>
      <nav className="flex h-[25px] shrink-0 items-center bg-[#217346] font-medium text-white">
        <a href="#" className="w-[51px] pl-[16px]">File</a>
        <a href="#" className="flex h-full w-[49px] items-center justify-center bg-[#f3f3f3] text-[#217346]">Home</a>
        {exTabs.map(([t, w]) => (
          <a key={t} href="#" className={"text-center whitespace-nowrap " + w}>{t}</a>
        ))}
        <svg viewBox="0 0 10 14" className="ml-[13px] h-[14px] w-[10px]" fill="none" stroke="#fff" strokeWidth="1.100"><path d="M3 10.500V9Q0.800 7.500 0.800 4.800A4.200 4.200 0 0 1 9.200 4.800Q9.200 7.500 7 9v1.500zM3.200 12.800h3.600" /></svg>
        <span className="pl-[12px] whitespace-nowrap">Tell me what you want to do</span>
      </nav>
      <ExcelRibbon />
      <div className="flex h-[37px] shrink-0 items-center gap-[3px] bg-[#e6e6e6] pt-px pl-[4px] text-[#444]">
        <div className="flex h-[22px] w-[86px] items-center justify-between border border-[#ccc] bg-white pr-[5px] pl-[5px]">
          <input aria-label="Name box" defaultValue="L12" className="w-[50px] bg-transparent outline-none" /><Caret />
        </div>
        <svg viewBox="0 0 2 10" className="mx-[8px] h-[10px] w-[2px]" fill="#999"><path d="M0 0h2v2H0zM0 4h2v2H0zM0 8h2v2H0z" /></svg>
        <div className="flex h-[22px] w-[92px] items-center justify-around border border-[#ccc] bg-white">
          <svg viewBox="0 0 10 10" className="h-[10px] w-[10px]" stroke="#bbb" strokeWidth="1.300"><path d="M1 1l8 8M9 1L1 9" /></svg>
          <svg viewBox="0 0 11 10" className="h-[10px] w-[11px]" fill="none" stroke="#bbb" strokeWidth="1.800"><path d="M0.800 5.500L4 8.500 10.300 1" /></svg>
          <span className="font-['Liberation_Serif',serif] text-[12px] italic">f<span className="text-[9px] font-bold">x</span></span>
        </div>
        <input aria-label="Formula" className="h-[22px] flex-1 border border-r-0 border-[#ccc] bg-white outline-none" />
      </div>
      <Sheet />
    </section>
  );
}

export default function App() {
  return (
    <div className="relative flex h-screen flex-col overflow-hidden border-t-2 border-l-2 border-[#a8a8a8] bg-[#f3f3f3] font-['Roboto',sans-serif]">
      <TitleBar />
      <Ribbon />
      <div className="mt-px flex flex-1 overflow-hidden font-['Liberation_Sans',sans-serif]">
        <Sidebar />
        <div className="flex flex-1 flex-col overflow-hidden"><Wave /><Balancer /></div>
        <div className="flex font-['Roboto',sans-serif]"><Channels /></div>
      </div>
      <div className="absolute -top-[2px] right-0 bottom-0 -left-[2px]">
        <Menus />
        <Excel />
      </div>
    </div>
  );
}
